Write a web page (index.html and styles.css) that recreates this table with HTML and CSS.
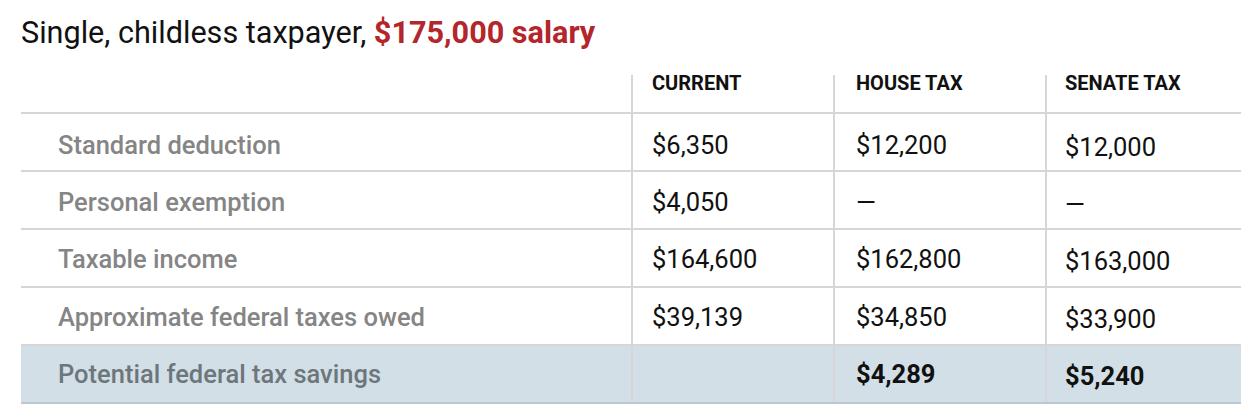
FILE: index.html
```html
<!DOCTYPE html>
<html>
<head>
<meta charset="utf-8">
<link rel="stylesheet" href="styles.css">
</head>
<body>
<div class="wrap">
  <h2 class="title">Single, childless taxpayer, <span class="accent">$175,000 salary</span></h2>
  <table class="tax">
    <thead>
      <tr>
        <th class="label-col"></th>
        <th class="c-current">CURRENT</th>
        <th class="c-house">HOUSE TAX</th>
        <th class="c-senate">SENATE TAX</th>
      </tr>
    </thead>
    <tbody>
      <tr class="r1">
        <td class="label">Standard deduction</td>
        <td class="current">$6,350</td>
        <td class="house">$12,200</td>
        <td class="senate">$12,000</td>
      </tr>
      <tr class="r2">
        <td class="label">Personal exemption</td>
        <td class="current">$4,050</td>
        <td class="house">—</td>
        <td class="senate">—</td>
      </tr>
      <tr class="r3">
        <td class="label">Taxable income</td>
        <td class="current">$164,600</td>
        <td class="house">$162,800</td>
        <td class="senate">$163,000</td>
      </tr>
      <tr class="r4">
        <td class="label">Approximate federal taxes owed</td>
        <td class="current">$39,139</td>
        <td class="house">$34,850</td>
        <td class="senate">$33,900</td>
      </tr>
      <tr class="r5 total">
        <td class="label">Potential federal tax savings</td>
        <td class="current"></td>
        <td class="house strong">$4,289</td>
        <td class="senate strong">$5,240</td>
      </tr>
    </tbody>
  </table>
</div>
</body>
</html>
```

FILE: styles.css
```css
html, body {
  margin: 0;
  padding: 0;
  background: #ffffff;
}
.wrap {
  padding: 0 8px 0 21px;
  font-family: Roboto, "Liberation Sans", sans-serif;
}
.title {
  margin: 0;
  padding-top: 15px;
  height: 60px;
  box-sizing: border-box;
  font-size: 30.6px;
  line-height: 36px;
  font-weight: 400;
  color: #111;
  white-space: nowrap;
}
.accent {
  color: #b3262b;
  font-weight: 700;
}
.tax {
  margin-top: 15px;
  width: 1220px;
  border-collapse: collapse;
  table-layout: fixed;
}
.tax th {
  height: 38px;
  box-sizing: border-box;
  text-align: left;
  vertical-align: top;
  padding: 0 0 0 21px;
  font-size: 20px;
  line-height: 16px;
  font-weight: 700;
  color: #111;
  border-bottom: 2px solid #d6d6d6;
  border-left: 2px solid #d6d6d6;
}
.tax th.label-col {
  width: 611px;
  border-left: none;
}
.tax th.c-current { width: 202px; padding-left: 19px; }
.tax th.c-house { width: 212px; padding-left: 21px; }
.tax th.c-senate { width: 195px; padding-left: 18px; }
.tax tr { --pt: 14px; }
.tax tr.r1 { --pt: 16px; }
.tax tr.r2 { --pt: 14.5px; }
.tax tr.r3 { --pt: 13.5px; }
.tax tr.r4 { --pt: 14px; }
.tax tr.r5 { --pt: 13px; }
.tax td {
  height: 58px;
  box-sizing: border-box;
  vertical-align: top;
  padding: var(--pt) 0 0 21px;
  font-size: 25.5px;
  line-height: 30px;
  color: #111;
  border-bottom: 2px solid #d6d6d6;
  border-left: 2px solid #d6d6d6;
  white-space: nowrap;
}
.tax td.current { padding-left: 19px; }
.tax td.house { padding-left: 21px; }
.tax td.senate {
  padding-left: 18px;
  padding-top: calc(var(--pt) + 2px);
}
.tax td.label {
  padding-left: 37px;
  border-left: none;
  font-size: 25.5px;
  font-weight: 500;
  color: #858585;
}
.total td {
  background: #d2dfe6;
  border-bottom-color: #bcc8cf;
}
.total td.label {
  color: #6d767b;
}
.tax td.strong {
  font-weight: 700;
  color: #111;
}
```
